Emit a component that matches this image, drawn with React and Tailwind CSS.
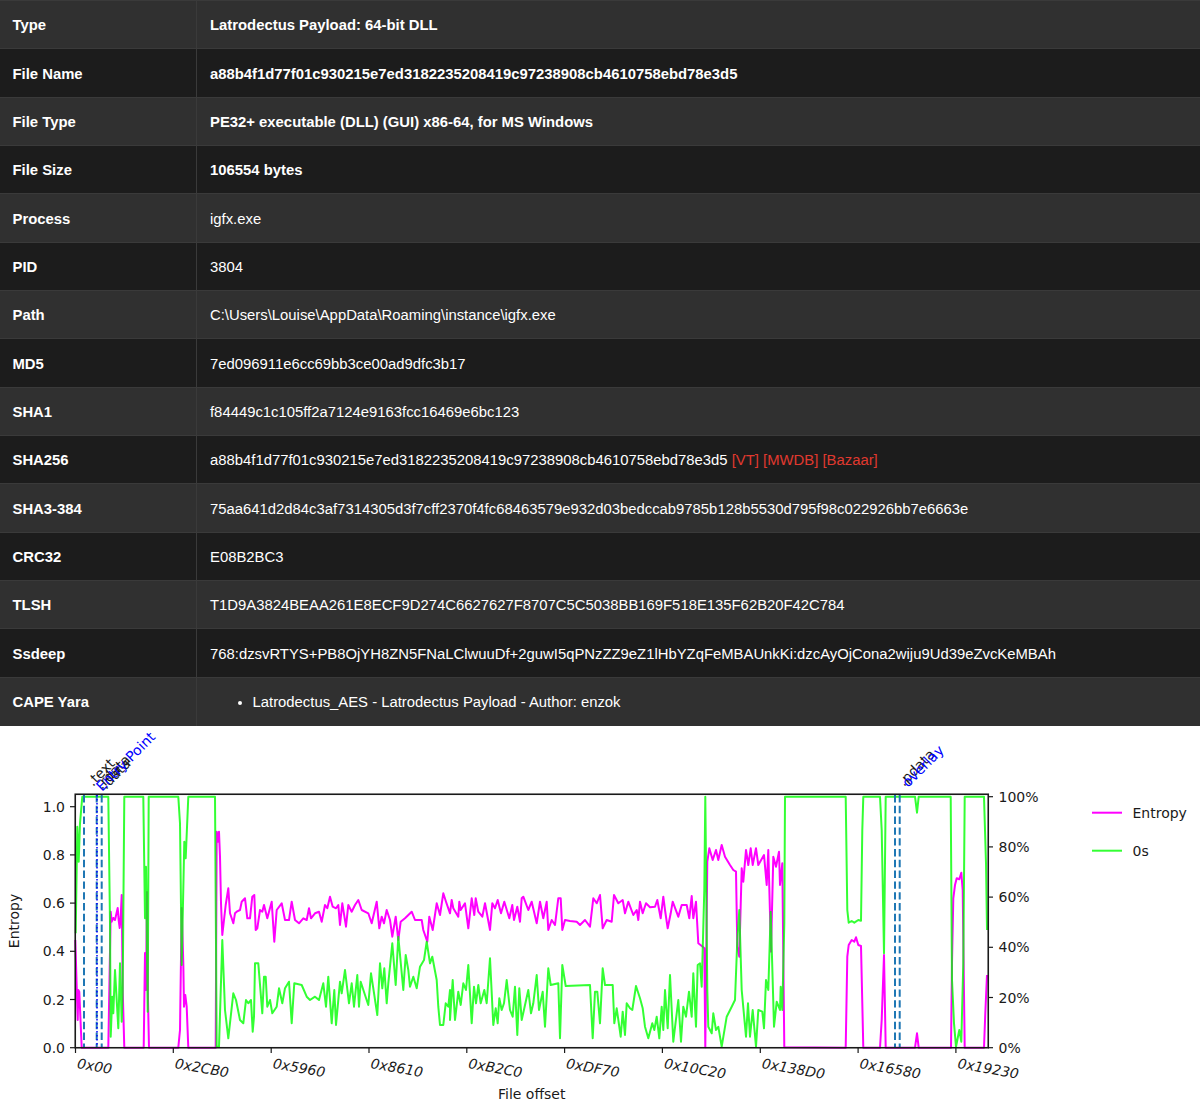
const rows = [
  ["Type", "Latrodectus Payload: 64-bit DLL", true],
  ["File Name", "a88b4f1d77f01c930215e7ed3182235208419c97238908cb4610758ebd78e3d5", true],
  ["File Type", "PE32+ executable (DLL) (GUI) x86-64, for MS Windows", true],
  ["File Size", "106554 bytes", true],
  ["Process", "igfx.exe"],
  ["PID", "3804"],
  ["Path", "C:\\Users\\Louise\\AppData\\Roaming\\instance\\igfx.exe"],
  ["MD5", "7ed096911e6cc69bb3ce00ad9dfc3b17"],
  ["SHA1", "f84449c1c105ff2a7124e9163fcc16469e6bc123"],
  ["SHA256", "sha"],
  ["SHA3-384", "75aa641d2d84c3af7314305d3f7cff2370f4fc68463579e932d03bedccab9785b128b5530d795f98c022926bb7e6663e"],
  ["CRC32", "E08B2BC3"],
  ["TLSH", "T1D9A3824BEAA261E8ECF9D274C6627627F8707C5C5038BB169F518E135F62B20F42C784"],
  ["Ssdeep", "768:dzsvRTYS+PB8OjYH8ZN5FNaLClwuuDf+2guwI5qPNzZZ9eZ1lHbYZqFeMBAUnkKi:dzcAyOjCona2wiju9Ud39eZvcKeMBAh"],
  ["CAPE Yara", "yara"],
];

const z = (ox, oy, a) => a.map(([x, y]) => `${(ox + x / 3).toFixed(1)},${(oy + y / 3).toFixed(1)}`).join(" ");

const magenta = [
  z(0, 0, [[226, 2820], [233, 3060], [235, 2970], [238, 2975], [245, 3143], [325, 3143], [332, 2735], [335, 2765], [340, 2754], [345, 2760], [353, 2724], [356, 2762], [359, 2784], [362, 2750], [365, 2685], [368, 2970], [373, 3143], [431, 3143], [435, 2859], [438, 2970], [441, 2676], [444, 3000], [447, 3143], [535, 3143], [540, 3090], [545, 2724], [550, 2890], [552, 3020], [556, 2985], [560, 3020], [565, 3143], [647, 3143], [650, 2495], [654, 2525], [657, 2495], [660, 2570], [663, 2710], [667, 2805], [672, 2760], [677, 2715], [685, 2665], [690, 2740], [695, 2755], [700, 2770], [705, 2740], [710, 2735]]),
  z(240, 860, [[0, 150], [5, 125], [15, 115], [22, 175], [30, 175], [37, 110], [43, 105], [47, 210], [52, 205], [60, 150], [67, 155], [72, 135], [82, 175], [95, 125], [103, 245], [110, 150], [125, 130], [135, 180], [147, 180], [155, 125], [165, 180], [177, 190], [190, 175], [200, 180], [207, 145], [213, 175], [225, 160], [237, 155], [245, 185], [255, 135], [262, 145], [270, 110], [278, 140], [288, 145], [295, 135], [300, 195], [307, 130], [318, 200], [325, 135], [335, 155], [345, 135], [355, 120], [365, 150], [385, 160], [395, 190], [410, 125], [418, 205], [425, 170], [432, 190], [440, 150], [450, 180], [457, 230], [467, 170], [475, 240], [482, 185], [495, 175], [515, 155], [525, 180], [545, 180], [550, 210], [562, 245], [568, 170], [578, 210], [590, 130], [600, 165], [610, 100], [618, 125], [630, 160]]),
  z(430, 860, [[65, 120], [70, 145], [85, 170], [88, 125], [92, 150], [105, 130], [115, 205], [125, 115], [133, 165], [137, 115], [145, 155], [157, 170], [165, 130], [180, 210], [187, 130], [195, 145], [203, 120], [213, 160], [223, 125], [238, 175], [247, 135], [252, 180], [262, 140], [270, 185], [275, 115], [280, 110], [295, 150], [305, 125], [320, 190], [330, 125], [340, 175], [350, 125], [355, 210], [365, 180], [375, 195], [385, 115], [392, 115], [397, 210], [405, 180], [420, 183], [440, 185], [450, 195], [465, 180], [480, 200], [490, 115], [500, 130], [510, 105], [518, 205], [530, 180], [545, 185], [552, 105], [565, 130], [578, 120], [585, 160], [595, 125], [610, 165], [620, 150], [625, 180], [630, 125]]),
  z(620, 790, [[68, 370], [78, 340], [90, 352], [105, 350], [112, 330], [122, 385], [130, 320], [135, 360], [143, 415], [152, 370], [158, 335], [175, 380], [185, 345], [200, 345], [208, 385], [215, 318], [220, 385], [228, 335], [235, 460], [248, 470], [253, 475], [256, 772], [262, 215], [268, 175], [278, 210], [288, 180], [295, 210], [305, 165], [315, 200], [330, 225], [340, 240], [348, 245], [352, 470], [358, 500], [365, 235], [370, 275], [378, 180], [385, 225], [392, 175], [398, 225], [408, 175], [415, 225], [432, 195], [440, 285], [445, 180], [453, 485], [460, 200], [468, 230], [477, 185], [480, 285], [487, 220], [493, 772]]),
  z(800, 730, [[137, 953], [142, 680], [146, 645], [155, 630], [163, 635], [168, 622], [175, 645], [183, 648], [187, 820], [190, 953], [240, 953], [245, 870], [252, 675], [257, 953], [345, 953], [351, 910], [356, 953], [453, 953], [456, 700], [460, 505], [465, 465], [470, 445], [478, 448], [484, 428], [488, 480], [494, 953], [552, 953], [556, 850], [561, 735]]),
].join(" ");

const green = [
  z(70, 790, [[17, 430], [22, 110], [26, 215], [30, 100], [37, 20], [115, 20], [120, 400], [122, 740], [127, 620], [130, 670], [135, 540], [145, 715], [150, 520], [155, 695], [158, 600], [163, 20], [220, 20], [225, 385], [228, 230], [233, 665], [236, 20], [325, 20], [330, 100], [335, 525], [343, 155], [347, 205], [355, 20], [435, 20], [440, 770], [447, 770], [457, 450], [465, 660], [475, 745], [490, 610], [498, 630]]),
  z(240, 860, [[0, 480], [10, 490], [18, 420], [25, 430], [33, 420], [38, 515], [42, 470], [45, 310], [55, 310], [67, 460], [72, 350], [77, 350], [82, 440], [90, 420], [97, 460], [110, 440], [117, 385], [127, 430], [135, 385], [147, 365], [155, 490], [163, 370], [185, 375], [200, 410], [210, 420], [225, 410], [237, 420], [250, 370], [258, 440], [265, 350], [275, 490], [283, 390], [288, 495], [300, 365], [305, 400], [315, 330], [327, 430], [335, 370], [342, 440], [352, 345], [357, 440], [362, 365], [375, 405], [385, 435], [393, 340], [400, 385], [412, 465], [420, 310], [427, 385], [433, 325], [440, 430], [445, 370], [457, 250], [467, 375], [475, 230], [490, 390], [497, 285], [505, 330], [510, 380], [520, 350], [530, 385], [540, 320], [552, 300], [560, 245], [570, 310], [577, 290], [590, 360], [595, 440], [600, 495], [610, 495], [617, 430], [625, 440], [630, 390]]),
  z(430, 860, [[60, 480], [68, 360], [75, 480], [85, 395], [92, 435], [100, 370], [108, 390], [115, 315], [125, 490], [132, 380], [138, 430], [145, 375], [152, 430], [163, 390], [170, 430], [180, 295], [190, 495], [197, 445], [203, 490], [208, 415], [215, 450], [222, 430], [230, 360], [240, 450], [248, 470], [255, 380], [262, 525], [268, 385], [275, 480], [283, 445], [295, 390], [303, 460], [310, 430], [320, 345], [327, 450], [338, 395], [345, 500], [355, 325], [362, 375], [385, 370], [390, 535], [397, 315], [407, 378], [480, 375], [488, 535], [495, 395], [502, 395], [510, 490], [518, 325], [525, 375], [548, 375], [553, 490], [560, 445], [572, 530], [578, 455], [585, 525], [590, 430], [600, 445], [607, 450], [618, 378], [630, 415]]),
  z(620, 790, [[68, 655], [75, 710], [85, 745], [97, 700], [103, 720], [110, 680], [118, 745], [125, 650], [130, 720], [135, 600], [143, 715], [150, 555], [160, 755], [175, 630], [183, 755], [190, 650], [198, 680], [207, 605], [215, 680], [220, 550], [228, 710], [233, 525], [240, 520], [245, 590], [253, 300], [256, 20], [262, 600], [265, 710], [275, 730], [280, 670], [288, 720], [295, 710], [305, 770], [320, 680], [335, 650], [345, 630], [352, 450], [358, 360], [365, 600], [378, 740], [384, 640], [390, 740], [398, 660], [408, 770], [415, 660], [427, 665], [432, 715], [438, 570], [445, 600], [452, 365], [462, 710], [470, 635], [480, 660], [482, 590], [487, 660], [493, 400], [495, 20]]),
  z(800, 730, [[137, 200], [142, 540], [146, 578], [155, 573], [163, 578], [175, 570], [183, 572], [187, 300], [190, 200], [240, 200], [245, 300], [252, 670], [257, 200], [345, 200], [351, 248], [356, 200], [452, 200], [456, 750], [462, 880], [468, 950], [478, 900], [484, 935], [490, 700], [494, 200], [552, 200], [558, 400], [561, 600]]),
].join(" ");

const xTicks = [
  [75.5, "0x00"], [173.3, "0x2CB0"], [271.2, "0x5960"], [369, "0x8610"], [466.8, "0xB2C0"],
  [564.6, "0xDF70"], [662.4, "0x10C20"], [760.3, "0x138D0"], [858.1, "0x16580"], [955.9, "0x19230"],
];
const leftTicks = [["1.0", 806.7], ["0.8", 854.9], ["0.6", 903.1], ["0.4", 951.3], ["0.2", 999.5], ["0.0", 1047.7]];
const rightTicks = [["100%", 796.7], ["80%", 846.9], ["60%", 897.1], ["40%", 947.3], ["20%", 997.5], ["0%", 1047.7]];

function Chart() {
  return (
    <svg viewBox="0 726 1200 378" className="block w-[1200px] h-[378px]" fontFamily="'DejaVu Sans', sans-serif" fontSize="14" fill="#1a1a1a">
      <polyline points={magenta} fill="none" stroke="#ff00ff" strokeWidth="2" strokeLinejoin="round" />
      <polyline points={green} fill="none" stroke="#00ff00" strokeOpacity="0.8" strokeWidth="2" strokeLinejoin="round" />
      {[84, 96.7, 101.7, 895, 899.7].map((x) => (
        <line key={x} x1={x} x2={x} y1="795" y2="1047" stroke="#1f77b4" strokeWidth="2" strokeDasharray="7.4 3.4" />
      ))}
      <line x1="97" x2="97" y1="795" y2="1047" stroke="#0000ff" strokeWidth="1.5" strokeDasharray="1.5 2.5" />
      <rect x="75.25" y="794.25" width="913" height="253.5" fill="none" stroke="#1a1a1a" strokeWidth="1.6" />
      {leftTicks.map(([t, y]) => (
        <g key={t}>
          <line x1="70" x2="75" y1={y} y2={y} stroke="#1a1a1a" strokeWidth="1.2" />
          <text x="65" y={y + 5} textAnchor="end">{t}</text>
        </g>
      ))}
      {rightTicks.map(([t, y]) => (
        <g key={t}>
          <line x1="988" x2="993" y1={y} y2={y} stroke="#1a1a1a" strokeWidth="1.2" />
          <text x="998.5" y={y + 5}>{t}</text>
        </g>
      ))}
      {xTicks.map(([x, t]) => (
        <g key={t}>
          <line x1={x} x2={x} y1="1048" y2="1053" stroke="#1a1a1a" strokeWidth="1.2" />
          <text transform={`translate(${x + 1} 1068) rotate(10)`} fontStyle="italic">{t}</text>
        </g>
      ))}
      <text transform="translate(19 921) rotate(-90)" textAnchor="middle">Entropy</text>
      <text x="531.7" y="1099" textAnchor="middle">File offset</text>
      <text transform="translate(93 787) rotate(-45)">.text</text>
      <text transform="translate(102 790) rotate(-45)">.rdata</text>
      <text transform="translate(106 790) rotate(-45)">.data</text>
      <text transform="translate(102 792) rotate(-45)" fill="#0000ff">Entry Point</text>
      <text transform="translate(904 787) rotate(-45)">.pdata</text>
      <text transform="translate(908 788) rotate(-45)" fill="#0000ff">overlay</text>
      <line x1="1092" x2="1122" y1="812.7" y2="812.7" stroke="#ff00ff" strokeWidth="2" />
      <text x="1132.5" y="818">Entropy</text>
      <line x1="1092" x2="1122" y1="850.7" y2="850.7" stroke="#00ff00" strokeOpacity="0.8" strokeWidth="2" />
      <text x="1132.5" y="856">0s</text>
    </svg>
  );
}

function Value({ value, bold }) {
  if (value === "sha") {
    return (
      <span>
        a88b4f1d77f01c930215e7ed3182235208419c97238908cb4610758ebd78e3d5{" "}
        <a className="text-[#e0392f]">[VT]</a> <a className="text-[#e0392f]">[MWDB]</a> <a className="text-[#e0392f]">[Bazaar]</a>
      </span>
    );
  }
  if (value === "yara") {
    return (
      <ul className="list-disc pl-[42.5px]">
        <li>Latrodectus_AES - Latrodectus Payload - Author: enzok</li>
      </ul>
    );
  }
  return <span className={bold ? "font-bold" : ""}>{value}</span>;
}

export default function App() {
  return (
    <div className="w-[1200px] bg-white font-['Liberation_Sans',Arial,sans-serif]">
      <div className="border-t border-[#3a3a3a] text-[14.85px] text-white">
        {rows.map(([label, value, bold], i) => (
          <div
            key={label}
            className={`flex h-[48.33px] border-b border-[#3a3a3a] last:border-b-0 ${i % 2 === 0 ? "bg-[#303030]" : "bg-[#1c1c1c]"}`}
          >
            <div className="flex w-[197px] shrink-0 items-center border-r border-[#3a3a3a] pl-[12.5px] pt-[1.6px] font-bold">{label}</div>
            <div className="flex grow items-center pl-[13px] pt-[1.6px]"><div><Value value={value} bold={bold} /></div></div>
          </div>
        ))}
      </div>
      <Chart />
    </div>
  );
}
